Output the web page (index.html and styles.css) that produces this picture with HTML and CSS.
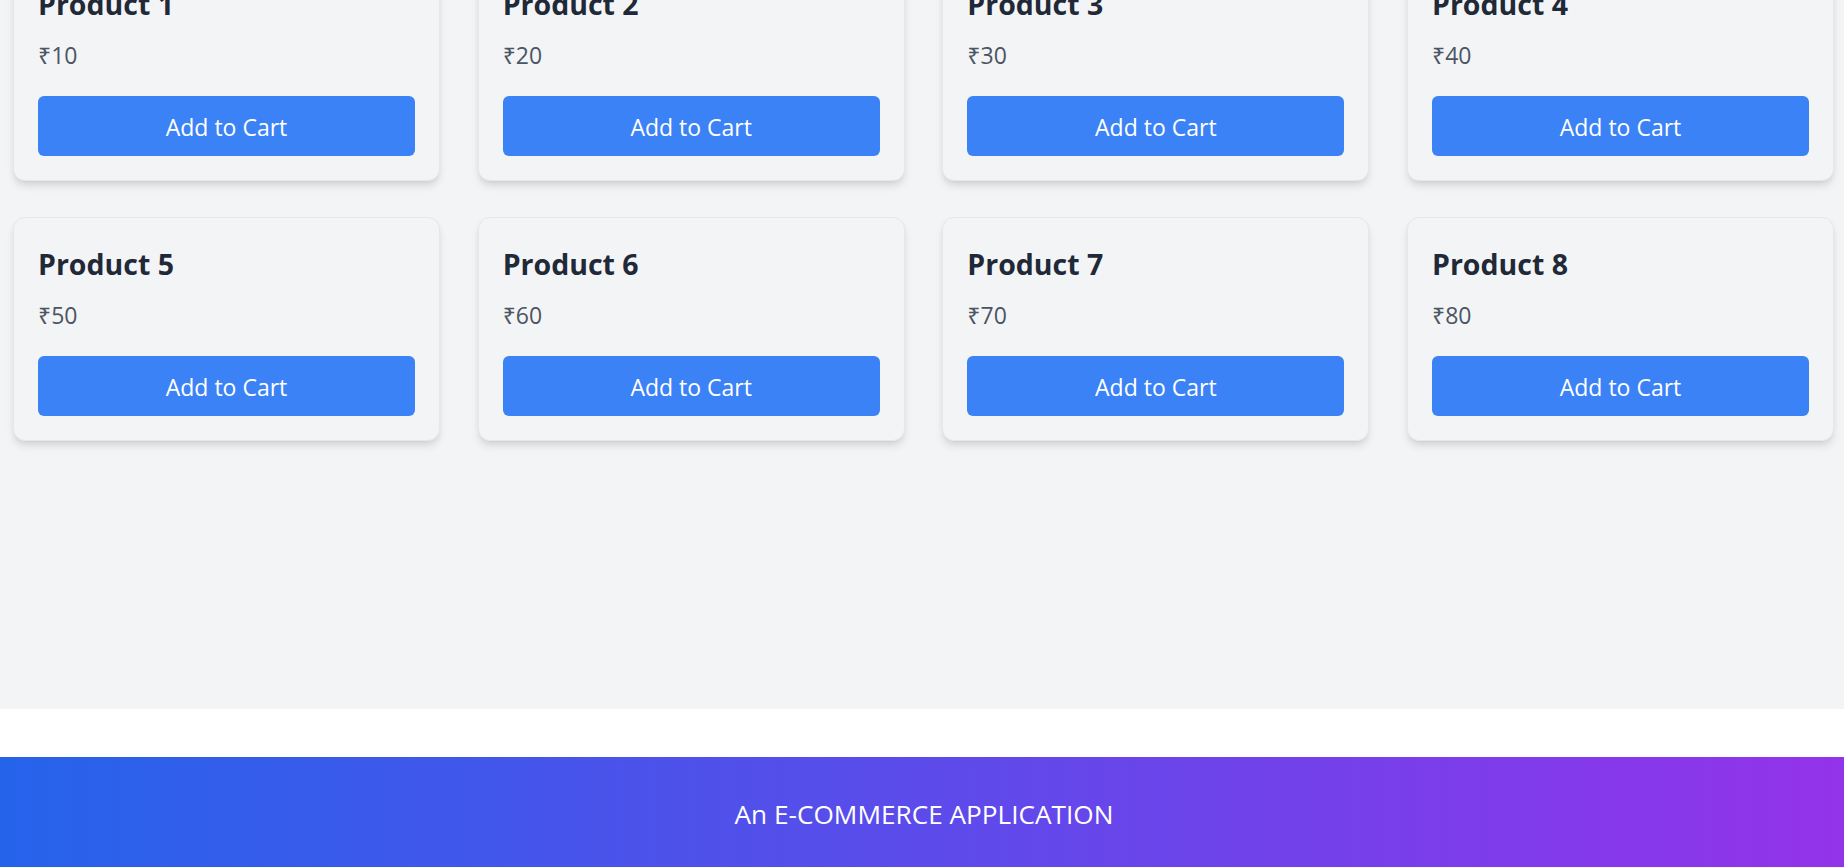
FILE: index.html
```html
<!DOCTYPE html>
<html lang="en">
<head>
<meta charset="utf-8">
<title>Products</title>
<link rel="stylesheet" href="styles.css">
</head>
<body>
<main class="shop">
  <div class="grid">
    <div class="card"><h2 class="title">Product 1</h2><p class="price">₹10</p><button class="btn">Add to Cart</button></div>
    <div class="card"><h2 class="title">Product 2</h2><p class="price">₹20</p><button class="btn">Add to Cart</button></div>
    <div class="card"><h2 class="title">Product 3</h2><p class="price">₹30</p><button class="btn">Add to Cart</button></div>
    <div class="card"><h2 class="title">Product 4</h2><p class="price">₹40</p><button class="btn">Add to Cart</button></div>
    <div class="card"><h2 class="title">Product 5</h2><p class="price">₹50</p><button class="btn">Add to Cart</button></div>
    <div class="card"><h2 class="title">Product 6</h2><p class="price">₹60</p><button class="btn">Add to Cart</button></div>
    <div class="card"><h2 class="title">Product 7</h2><p class="price">₹70</p><button class="btn">Add to Cart</button></div>
    <div class="card"><h2 class="title">Product 8</h2><p class="price">₹80</p><button class="btn">Add to Cart</button></div>
  </div>
</main>
<footer class="footer">
  <p class="footer-text">An E-COMMERCE APPLICATION</p>
</footer>
</body>
</html>
```
FILE: styles.css
```css
* { box-sizing: border-box; }
html, body { margin: 0; padding: 0; }
body {
  background: #ffffff;
  font-family: "Open Sans", "Noto Sans", sans-serif;
}
.shop {
  background: #f3f4f6;
  padding: 0 10px 268px 13px;
}
.grid {
  margin-top: -43px;
  display: grid;
  grid-template-columns: repeat(4, 1fr);
  column-gap: 37.67px;
  row-gap: 36px;
}
.card {
  background: #f3f4f6;
  border: 1px solid #e5e7eb;
  border-radius: 12px;
  padding: 24px;
  box-shadow: 0 6px 9px -1.5px rgba(0,0,0,0.1), 0 3px 6px -3px rgba(0,0,0,0.1);
}
.title {
  margin: 0 0 12px;
  padding-top: 1px;
  height: 42px;
  font-size: 28.5px;
  line-height: 42px;
  font-weight: 700;
  color: #1f2937;
}
.price {
  margin: 0 0 24px;
  padding-top: 1px;
  height: 36px;
  font-size: 23px;
  line-height: 36px;
  color: #4b5563;
}
.btn {
  display: block;
  width: 100%;
  height: 60px;
  border: 0;
  border-radius: 6px;
  background: #3b82f6;
  color: #ffffff;
  font-family: inherit;
  font-size: 23px;
  line-height: 36px;
  padding: 2px 0 0;
}
.footer {
  margin-top: 48px;
  height: 110px;
  padding: 4px 0 0 4px;
  background: linear-gradient(to right, #2563eb, #9333ea);
  display: flex;
  align-items: center;
  justify-content: center;
}
.footer-text {
  margin: 0;
  color: #ffffff;
  font-size: 26.2px;
  line-height: 42px;
}
```
